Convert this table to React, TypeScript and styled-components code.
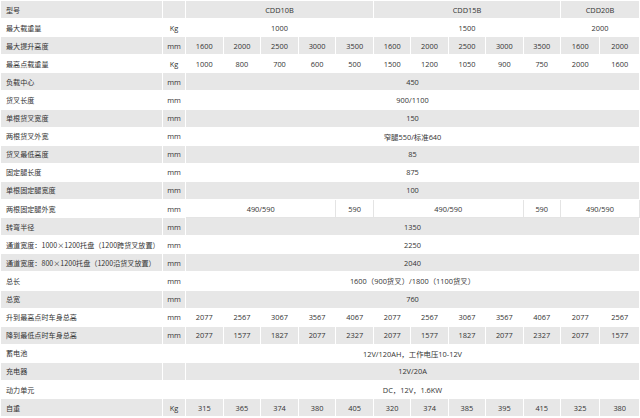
import React from "react";
import styled, { createGlobalStyle } from "styled-components";

const GlobalStyle = createGlobalStyle`
  html, body {
    margin: 0;
    padding: 0;
    background: #fff;
  }
  body {
    font-family: "Open Sans", "Noto Sans CJK SC", sans-serif;
  }
`;

const Spec__table = styled.table`
  width: 640px;
  table-layout: fixed;
  border-collapse: collapse;
  font-size: 7.4px;
  color: #333;
`;

const Col = styled.col<{ $w: number }>`
  width: ${(p) => p.$w}px;
`;

const Row = styled.tr<{ $shaded: boolean }>`
  height: 18.1px;
  td {
    background: ${(p) => (p.$shaded ? "#e7e7e7" : "#fff")};
  }
`;

const Label = styled.td`
  padding: 0 0 0 5px;
  text-align: left;
  white-space: nowrap;
  border: 1px solid #fff;
  font-size: 7.1px;
  font-family: "Noto Sans CJK SC", "Open Sans", sans-serif;
`;

const Unit = styled.td`
  padding: 0;
  text-align: center;
  border: 1px solid #fff;
`;

const Value = styled.td<{ $ruled?: boolean }>`
  padding: 0;
  text-align: center;
  white-space: nowrap;
  border: 1px solid ${(p) => (p.$ruled ? "#e4e4e4" : "#fff")};
  font-family: "Open Sans", "Noto Sans CJK SC", sans-serif;
`;

type Cell = string | [string, number];

interface Spec {
  label: string;
  unit: string;
  cells: Cell[];
  ruled?: boolean;
}

const specs: Spec[] = [
  { label: "型号", unit: "", cells: [["CDD10B", 5], ["CDD15B", 5], ["CDD20B", 2]] },
  { label: "最大载重量", unit: "Kg", cells: [["1000", 5], ["1500", 5], ["2000", 2]] },
  {
    label: "最大提升高度",
    unit: "mm",
    cells: ["1600", "2000", "2500", "3000", "3500", "1600", "2000", "2500", "3000", "3500", "1600", "2000"],
  },
  {
    label: "最高点载重量",
    unit: "Kg",
    cells: ["1000", "800", "700", "600", "500", "1500", "1200", "1050", "900", "750", "2000", "1600"],
  },
  { label: "负载中心", unit: "mm", cells: [["450", 12]] },
  { label: "货叉长度", unit: "mm", cells: [["900/1100", 12]] },
  { label: "单根货叉宽度", unit: "mm", cells: [["150", 12]] },
  { label: "两根货叉外宽", unit: "mm", cells: [["窄腿550/标准640", 12]] },
  { label: "货叉最低高度", unit: "mm", cells: [["85", 12]] },
  { label: "固定腿长度", unit: "mm", cells: [["875", 12]] },
  { label: "单根固定腿宽度", unit: "mm", cells: [["100", 12]] },
  {
    label: "两根固定腿外宽",
    unit: "mm",
    ruled: true,
    cells: [["490/590", 4], "590", ["490/590", 4], "590", ["490/590", 2]],
  },
  { label: "转弯半径", unit: "mm", cells: [["1350", 12]] },
  { label: "通道宽度：1000×1200托盘（1200跨货叉放置）", unit: "mm", cells: [["2250", 12]] },
  { label: "通道宽度：800×1200托盘（1200沿货叉放置）", unit: "mm", cells: [["2040", 12]] },
  { label: "总长", unit: "mm", cells: [["1600（900货叉）/1800（1100货叉）", 12]] },
  { label: "总宽", unit: "mm", cells: [["760", 12]] },
  {
    label: "升到最高点时车身总高",
    unit: "mm",
    cells: ["2077", "2567", "3067", "3567", "4067", "2077", "2567", "3067", "3567", "4067", "2077", "2567"],
  },
  {
    label: "降到最低点时车身总高",
    unit: "mm",
    cells: ["2077", "1577", "1827", "2077", "2327", "2077", "1577", "1827", "2077", "2327", "2077", "1577"],
  },
  { label: "蓄电池", unit: "", cells: [["12V/120AH，工作电压10-12V", 12]] },
  { label: "充电器", unit: "", cells: [["12V/20A", 12]] },
  { label: "动力单元", unit: "", cells: [["DC，12V，1.6KW", 12]] },
  {
    label: "自重",
    unit: "Kg",
    cells: ["315", "365", "374", "380", "405", "320", "374", "385", "395", "415", "325", "380"],
  },
];

// label, unit, then 5 + 5 + 2 model columns
const colWidths = [162, 23, 37.6, 37.6, 37.6, 37.6, 37.6, 37.4, 37.4, 37.4, 37.4, 37.4, 39.5, 39.5];

const App: React.FC = () => {
  return (
    <>
      <GlobalStyle />
      <Spec__table>
        <colgroup>
          {colWidths.map((w, i) => (
            <Col key={i} $w={w} />
          ))}
        </colgroup>
        <tbody>
          {specs.map((spec, i) => (
            <Row key={spec.label} $shaded={i % 2 === 0}>
              <Label>{spec.label}</Label>
              <Unit>{spec.unit}</Unit>
              {spec.cells.map((cell, j) => {
                const [text, span] = typeof cell === "string" ? [cell, 1] : cell;
                return (
                  <Value key={j} colSpan={span} $ruled={spec.ruled}>
                    {text}
                  </Value>
                );
              })}
            </Row>
          ))}
        </tbody>
      </Spec__table>
    </>
  );
};

export default App;
